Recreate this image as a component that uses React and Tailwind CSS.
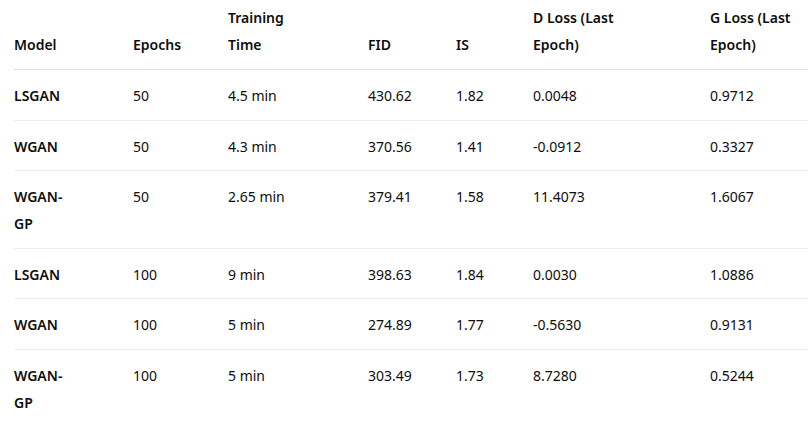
const rows = [
  ["LSGAN", "50", "4.5 min", "430.62", "1.82", "0.0048", "0.9712"],
  ["WGAN", "50", "4.3 min", "370.56", "1.41", "-0.0912", "0.3327"],
  ["WGAN-GP", "50", "2.65 min", "379.41", "1.58", "11.4073", "1.6067"],
  ["LSGAN", "100", "9 min", "398.63", "1.84", "0.0030", "1.0886"],
  ["WGAN", "100", "5 min", "274.89", "1.77", "-0.5630", "0.9131"],
  ["WGAN-GP", "100", "5 min", "303.49", "1.73", "8.7280", "0.5244"],
]

const widths = ["w-[119px]", "w-[95px]", "w-[140px]", "w-[88px]", "w-[77px]", "w-[177px]", "w-[120px]"]

const headers = [
  { label: "Model", max: "max-w-[100px]" },
  { label: "Epochs", max: "max-w-[80px]" },
  { label: "Training Time", max: "max-w-[70px]" },
  { label: "FID", max: "max-w-[70px]" },
  { label: "IS", max: "max-w-[60px]" },
  { label: "D Loss (Last Epoch)", max: "max-w-[100px]" },
  { label: "G Loss (Last Epoch)", max: "max-w-[100px]" },
]

const App = () => {
  return (
    <div className="w-[808px] h-[421px] overflow-hidden bg-white text-[#0d0d0d] font-['Noto_Sans','Open_Sans',sans-serif] text-[14px] leading-[27px]">
      <div className="pl-[14px]">
        <table className="table-fixed border-collapse w-[816px] text-left">
          <thead>
            <tr className="border-b border-[#e0e0e0]">
              {headers.map((h, i) => (
                <th key={i} className={`${widths[i]} align-bottom pt-[4px] pb-[11px] font-semibold`}>
                  <span className={`block ${h.max}`}>{h.label}</span>
                </th>
              ))}
            </tr>
          </thead>
          <tbody>
            {rows.map((r, ri) => (
              <tr key={ri} className="border-b border-[#ececec]">
                {r.map((c, ci) => (
                  <td key={ci} className={`align-top pt-[12px] pb-[10.5px] ${ci === 0 ? "font-semibold" : ""}`}>
                    {ci === 0 ? <span className="block max-w-[56px]">{c}</span> : c}
                  </td>
                ))}
              </tr>
            ))}
          </tbody>
        </table>
      </div>
    </div>
  )
}

export default App
